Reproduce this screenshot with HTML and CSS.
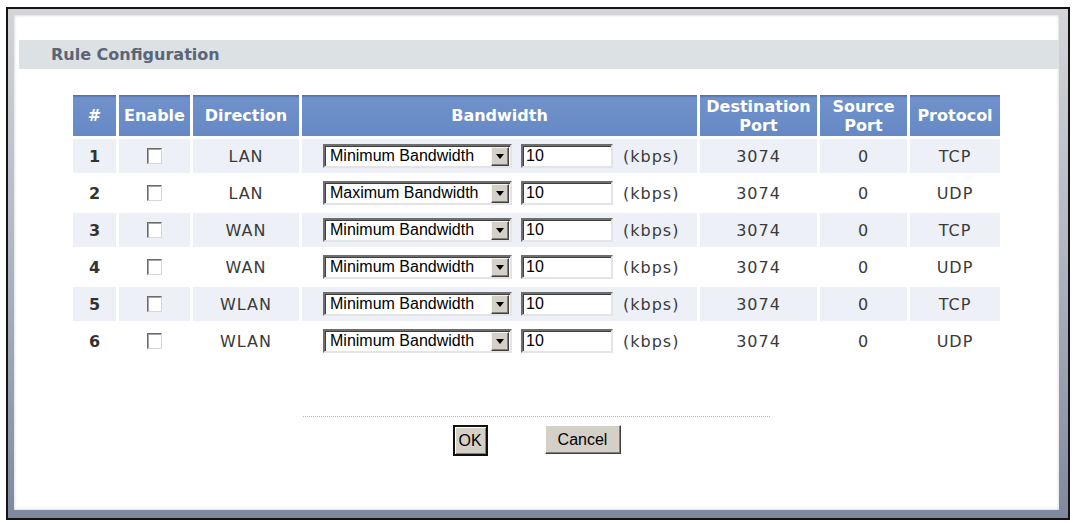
FILE: index.html
```html
<!DOCTYPE html>
<html lang="en">
<head>
    <meta charset="UTF-8">
    <title>Rule Configuration</title>
    <link rel="stylesheet" href="styles.css">
</head>
<body>
    <div class="frame">
        <div class="panel">
            <h2 class="section-title">Rule Configuration</h2>

            <table class="rules">
                <thead>
                    <tr>
                        <th class="col-num">#</th>
                        <th class="col-enable">Enable</th>
                        <th class="col-dir">Direction</th>
                        <th class="col-bw">Bandwidth</th>
                        <th class="col-dport">Destination<br>Port</th>
                        <th class="col-sport">Source<br>Port</th>
                        <th class="col-proto">Protocol</th>
                    </tr>
                </thead>
                <tbody id="ruleRows">
                    <!-- rows are built by the script below -->
                </tbody>
            </table>

            <div class="actions">
                <div class="dotted"></div>
                <div class="buttons">
                    <button class="btn btn-default">OK</button>
                    <button class="btn">Cancel</button>
                </div>
            </div>
        </div>
    </div>

    <script>
        // rule data
        const rules = [
            { dir: 'LAN',  mode: 'Minimum Bandwidth', bw: 10, dport: 3074, sport: 0, proto: 'TCP' },
            { dir: 'LAN',  mode: 'Maximum Bandwidth', bw: 10, dport: 3074, sport: 0, proto: 'UDP' },
            { dir: 'WAN',  mode: 'Minimum Bandwidth', bw: 10, dport: 3074, sport: 0, proto: 'TCP' },
            { dir: 'WAN',  mode: 'Minimum Bandwidth', bw: 10, dport: 3074, sport: 0, proto: 'UDP' },
            { dir: 'WLAN', mode: 'Minimum Bandwidth', bw: 10, dport: 3074, sport: 0, proto: 'TCP' },
            { dir: 'WLAN', mode: 'Minimum Bandwidth', bw: 10, dport: 3074, sport: 0, proto: 'UDP' }
        ];

        function createRow(rule, i) {
            return `
                <tr class="${i % 2 === 0 ? 'shaded' : ''}">
                    <td class="num">${i + 1}</td>
                    <td><input type="checkbox" class="check"></td>
                    <td>${rule.dir}</td>
                    <td class="bw-cell">
                        <span class="select">
                            <span class="select-text">${rule.mode}</span>
                            <span class="select-arrow"></span>
                        </span>
                        <input type="text" class="text-input" value="${rule.bw}">
                        <span class="unit">(kbps)</span>
                    </td>
                    <td>${rule.dport}</td>
                    <td>${rule.sport}</td>
                    <td>${rule.proto}</td>
                </tr>
            `;
        }

        const tbody = document.getElementById('ruleRows');
        tbody.innerHTML = rules.map(createRow).join('');
    </script>
</body>
</html>
```

FILE: styles.css
```css
* {
    box-sizing: border-box;
}

body {
    margin: 0;
    padding: 7px 3px 3px 6px;
    background-color: #fff;
    font-family: 'DejaVu Sans', Verdana, sans-serif;
}

.frame {
    height: 513px;
    border: 2px solid #141414;
    padding: 6px 9px 8px 6px;
    background: linear-gradient(to bottom, #d4d5d8 0%, #b3b8c4 45%, #7f889d 100%);
    display: flex;
}

.panel {
    flex: 1;
    background-color: #fff;
    box-shadow: inset 0 0 3px rgba(110, 120, 140, 0.45);
    display: flex;
    flex-direction: column;
}

.section-title {
    margin: 25px 0 0 5px;
    height: 29px;
    padding-left: 32px;
    background-color: #dce2e4;
    color: #5a6577;
    font-size: 16px;
    font-weight: bold;
    line-height: 30px;
}

.rules {
    margin: 23px auto 0;
    width: 933px;
    border-collapse: separate;
    border-spacing: 3px;
    table-layout: fixed;
    color: #3a3a3a;
    font-size: 16px;
    letter-spacing: 1px;
}

.col-num { width: 43px; }
.col-enable { width: 71px; }
.col-dir { width: 106px; }
.col-bw { width: 395px; }
.col-dport { width: 117px; }
.col-sport { width: 87px; }
.col-proto { width: 90px; }

.rules th {
    height: 41px;
    padding: 0;
    background: linear-gradient(to bottom, #4b6ca7 0px, #7091ca 3px, #6689c5 100%);
    color: #fff;
    font-size: 16px;
    font-weight: bold;
    line-height: 19px;
    letter-spacing: 0;
    white-space: nowrap;
}

.rules td {
    height: 34px;
    padding: 0;
    text-align: center;
    vertical-align: middle;
}

.rules tr.shaded td {
    background-color: #edf1f7;
}

.rules td.num {
    font-weight: bold;
    letter-spacing: 0;
    color: #333;
}

.check {
    appearance: none;
    -webkit-appearance: none;
    display: inline-block;
    width: 15px;
    height: 16px;
    margin: 3px 0 0;
    background-color: #fff;
    border: 1px solid;
    border-color: #6a6a6a #d6d6d6 #d6d6d6 #6a6a6a;
    box-shadow: inset 1px 1px 0 #a4a4a4;
}

.rules td.bw-cell {
    text-align: left;
    padding-left: 21px;
    white-space: nowrap;
    font-size: 0;
}

.select {
    display: inline-flex;
    align-items: center;
    vertical-align: middle;
    width: 189px;
    height: 24px;
    border: 2px solid;
    border-color: #6e6e6e #e4e4e4 #e4e4e4 #6e6e6e;
    box-shadow: inset 1px 1px 0 #404040;
    background-color: #fff;
    font-family: 'Liberation Sans', Arial, sans-serif;
    font-size: 16px;
    letter-spacing: 0;
    color: #000;
}

.select-text {
    flex: 1;
    padding-left: 5px;
    line-height: 20px;
}

.select-arrow {
    position: relative;
    width: 18px;
    height: 19px;
    margin: 1px 1px 0 0;
    background-color: #d4d0c8;
    border: 1px solid;
    border-color: #f4f4f4 #404040 #404040 #f4f4f4;
    box-shadow: inset -1px -1px 0 #808080;
}

.select-arrow::after {
    content: '';
    position: absolute;
    left: 4px;
    top: 6px;
    border-left: 4px solid transparent;
    border-right: 4px solid transparent;
    border-top: 5px solid #000;
}

.text-input {
    vertical-align: middle;
    width: 92px;
    height: 24px;
    margin-left: 8px;
    padding: 0 0 0 3px;
    border: 2px solid;
    border-color: #6e6e6e #e4e4e4 #e4e4e4 #6e6e6e;
    box-shadow: inset 1px 1px 0 #404040;
    background-color: #fff;
    font-family: 'Liberation Sans', Arial, sans-serif;
    font-size: 16px;
    color: #000;
    outline: none;
}

.unit {
    vertical-align: middle;
    margin-left: 9px;
    font-size: 16px;
    letter-spacing: 1px;
}

.actions {
    margin-top: 55px;
    display: flex;
    flex-direction: column;
    align-items: center;
}

.dotted {
    width: 467px;
    border-top: 1px dotted #b4b4b4;
}

.buttons {
    margin-top: 8px;
    display: flex;
    align-items: flex-start;
    gap: 57px;
}

.btn {
    height: 29px;
    padding: 0 8px;
    background-color: #d4d0c8;
    border: 1px solid;
    border-color: #fff #404040 #404040 #fff;
    box-shadow: inset -1px -1px 0 #808080;
    font-family: 'Liberation Sans', Arial, sans-serif;
    font-size: 16px;
    color: #000;
    cursor: pointer;
}

.btn:last-child {
    width: 76px;
}

.btn-default {
    width: 35px;
    height: 31px;
    padding: 0;
    border: 2px solid #111;
    box-shadow: inset 1px 1px 0 #fff, inset -1px -1px 0 #808080;
}
```
